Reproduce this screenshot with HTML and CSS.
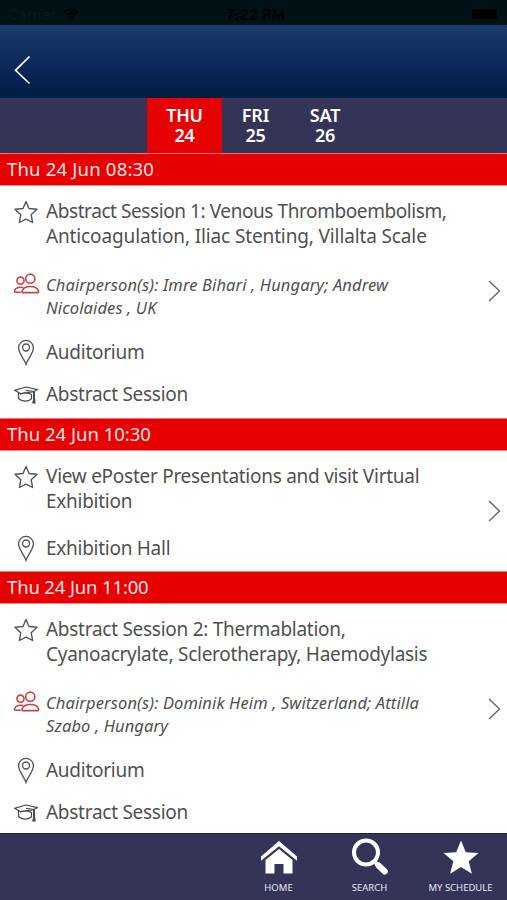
FILE: index.html
```html
<!DOCTYPE html>
<html lang="en">
<head>
  <meta charset="UTF-8">
  <meta name="viewport" content="width=device-width, initial-scale=1">
  <title>Schedule</title>
  <link rel="stylesheet" href="styles.css">
</head>
<body>
<svg class="symbols" width="0" height="0">
  <symbol id="star" viewBox="0 0 24 24">
    <path d="M12 1.400l3 7.100 8 .8-5.800 5.400 1.400 7.800-6.600-3.400-6.600 3.400 1.400-7.800L1 9.300l8-.8z" fill="none" stroke="#555" stroke-width="1.400" stroke-linejoin="round"/>
  </symbol>
  <symbol id="people" viewBox="0 0 28 22">
    <g fill="none" stroke="#c6444a" stroke-width="1.700">
      <circle cx="18" cy="6" r="4.800"/>
      <circle cx="7.700" cy="8" r="3.700"/>
      <path d="M10.200 20.500c-.9 0-1.100-.8-.8-1.700 1-2.900 4-4.600 8.600-4.600s7.600 1.700 8.600 4.600c.3.900.1 1.700-.8 1.700z"/>
      <path d="M8 20.200H2.600c-1.200 0-1.400-.9-1-1.900.9-2.200 3.300-3.400 6.400-3.400 1 0 2 .1 2.700.4"/>
    </g>
  </symbol>
  <symbol id="pin" viewBox="0 0 18 28">
    <g fill="none" stroke="#555" stroke-width="1.400">
      <path d="M9 26.200C7.300 20.600 1.300 15 1.300 9.200a7.700 7.700 0 0 1 15.400 0C16.700 15 10.700 20.600 9 26.200z"/>
      <circle cx="9" cy="8.800" r="3.600"/>
    </g>
  </symbol>
  <symbol id="cap" viewBox="0 0 26 20">
    <g fill="none" stroke="#4a4a4a" stroke-width="1.200" stroke-linejoin="round">
      <path d="M1.500 5.300L13 2l11.500 2.700-5 2.300L7.500 8.500z"/>
      <path d="M5.500 7.500v6c3.500 3.400 9.500 3.400 13 .2V9.500c-3.500-2-8-2-11.500-.2M13 5.300l8 1.200"/>
      <path d="M21 6.500V15" stroke-width="2"/>
      <path d="M20.300 14l-1.300 4.200 3.700.6-.6-4.800z" fill="#4a4a4a" stroke="none"/>
    </g>
  </symbol>
  <symbol id="chevron" viewBox="0 0 14 24">
    <path d="M2 2l10.500 10L2 22" fill="none" stroke="#666" stroke-width="1.400"/>
  </symbol>
</svg>

<div class="app">
  <div class="status">
    <span class="carrier">Carrier
      <svg width="16" height="12" viewBox="0 0 16 12"><path d="M1 4.500a10 10 0 0 1 14 0M3.500 7a6.500 6.500 0 0 1 9 0" fill="none" stroke="#000" stroke-width="2.200"/><path d="M5.500 9a3.600 3.600 0 0 1 5 0L8 11.700z"/></svg>
    </span>
    <span class="clock">7:22 PM</span>
    <span class="battery"><i></i></span>
  </div>

  <header class="header">
    <svg width="17" height="30" viewBox="0 0 17 30"><path d="M15.500 1.500L1.500 15.300l14 13.200" fill="none" stroke="#fff" stroke-width="1.700"/></svg>
  </header>

  <nav class="days">
    <a class="day active">THU<br>24</a>
    <a class="day fri">FRI<br>25</a>
    <a class="day sat">SAT<br>26</a>
  </nav>

  <main class="sessions">
    <h2 class="time wide">Thu 24 Jun 08:30</h2>
    <section class="session long">
      <div class="info">
        <div class="row title"><svg class="icon star"><use href="#star"/></svg><p><span class="tight">Abstract Session 1: Venous Thromboembolism,</span><br><span class="loose">Anticoagulation, Iliac Stenting, Villalta Scale</span></p></div>
        <div class="row chair"><svg class="icon people"><use href="#people"/></svg><p>Chairperson(s): Imre Bihari , Hungary; Andrew<br>Nicolaides , UK</p></div>
        <div class="row place"><svg class="icon pin"><use href="#pin"/></svg><p>Auditorium</p></div>
        <div class="row type"><svg class="icon cap"><use href="#cap"/></svg><p>Abstract Session</p></div>
      </div>
      <svg class="chevron"><use href="#chevron"/></svg>
    </section>

    <h2 class="time">Thu 24 Jun 10:30</h2>
    <section class="session short">
      <div class="info">
        <div class="row title"><svg class="icon star"><use href="#star"/></svg><p>View ePoster Presentations and visit Virtual<br>Exhibition</p></div>
        <div class="row place"><svg class="icon pin"><use href="#pin"/></svg><p>Exhibition Hall</p></div>
      </div>
      <svg class="chevron"><use href="#chevron"/></svg>
    </section>

    <h2 class="time narrow">Thu 24 Jun 11:00</h2>
    <section class="session long">
      <div class="info">
        <div class="row title"><svg class="icon star"><use href="#star"/></svg><p>Abstract Session 2: Thermablation,<br>Cyanoacrylate, Sclerotherapy, Haemodylasis</p></div>
        <div class="row chair"><svg class="icon people"><use href="#people"/></svg><p>Chairperson(s): Dominik Heim , Switzerland; Attilla<br>Szabo , Hungary</p></div>
        <div class="row place"><svg class="icon pin"><use href="#pin"/></svg><p>Auditorium</p></div>
        <div class="row type"><svg class="icon cap"><use href="#cap"/></svg><p>Abstract Session</p></div>
      </div>
      <svg class="chevron"><use href="#chevron"/></svg>
    </section>
  </main>

  <footer class="tabbar">
    <a class="tab">
      <svg width="38" height="38" viewBox="0 0 38 38" fill="#fff"><path d="M1 18.500L19 3l18 15.500v4.200L19 8.200 1 22.700z"/><path d="M5.500 22L19 11l13.500 11v13.500h-9V26h-9v9.500h-9z"/></svg>
      <span>HOME</span>
    </a>
    <a class="tab">
      <svg width="38" height="38" viewBox="0 0 38 38"><circle cx="15" cy="14.500" r="12" fill="none" stroke="#fff" stroke-width="4"/><path d="M23.500 23.500l4 4" stroke="#fff" stroke-width="4"/><path d="M27.500 27.500l6.300 6" stroke="#fff" stroke-width="6" stroke-linecap="round"/></svg>
      <span>SEARCH</span>
    </a>
    <a class="tab">
      <svg width="38" height="38" viewBox="0 0 38 38" fill="#fff"><path d="M19 2.500l4.800 11.700 12.700.9-9.800 8.100 3.200 12.600L19 28.900 8.100 35.800l3.200-12.600-9.800-8.100 12.700-.9z"/></svg>
      <span>MY SCHEDULE</span>
    </a>
  </footer>
</div>
</body>
</html>
```

FILE: styles.css
```css
* {
  box-sizing: border-box;
}
body {
  margin: 0;
  font-family: "Noto Sans", sans-serif;
  color: #505050;
  background: #fff;
}
p, h2 {
  margin: 0;
}
svg {
  display: block;
  flex: none;
}
.symbols {
  position: absolute;
}
.app {
  display: flex;
  flex-direction: column;
  width: 507px;
  height: 900px;
  overflow: hidden;
}

/* top bars */
.status {
  display: grid;
  grid-template-columns: 1fr auto 1fr;
  align-items: center;
  height: 25px;
  padding: 3px 10px 0 15px;
  background: #001216;
  color: #000;
  font: 14px Inter, sans-serif;
}
.carrier {
  display: flex;
  align-items: center;
  gap: 7px;
  margin-left: -7px;
  color: #061b1f;
  letter-spacing: .3px;
}
.clock {
  font-weight: 600;
  letter-spacing: .5px;
}
.battery {
  display: flex;
  justify-content: flex-end;
}
.battery i {
  width: 25px;
  height: 10px;
  border-radius: 2px;
  background: #000;
}
.header {
  display: flex;
  align-items: center;
  height: 73px;
  padding: 17px 0 0 14px;
  background: linear-gradient(#193d6b, #0b2656 60%, #001d43);
}
.days {
  display: flex;
  height: 55px;
  padding-left: 147px;
  background: #333458;
}
.day {
  padding-top: 8px;
  color: #fff;
  font-size: 18px;
  font-weight: 600;
  line-height: 19.500px;
  letter-spacing: -.2px;
  text-align: center;
}
.active {
  width: 75px;
  background: #e60000;
}
.fri {
  width: 67px;
}
.sat {
  width: 72px;
}

/* list */
.sessions {
  height: 680px;
  overflow: hidden;
}
.time {
  height: 33px;
  padding-left: 7px;
  border-top: 1px solid #ef7777;
  border-bottom: 1px solid #f28c8c;
  background: #e60000;
  color: #ffe3e3;
  font-size: 18.500px;
  font-weight: 400;
  line-height: 30px;
}
.wide {
  letter-spacing: .2px;
}
.narrow {
  letter-spacing: -.15px;
}
.session {
  display: flex;
  justify-content: space-between;
  align-items: center;
  padding: 0 6px 0 13px;
}
.long {
  height: 232px;
}
.short {
  height: 120px;
}
.info {
  align-self: flex-start;
  padding-top: 13px;
}
.row {
  display: grid;
  grid-template-columns: 26px auto;
  column-gap: 7px;
  font-size: 19px;
  line-height: 24.500px;
  letter-spacing: -.27px;
  white-space: nowrap;
}
.tight {
  letter-spacing: -.42px;
}
.loose {
  letter-spacing: -.13px;
}
.icon {
  justify-self: center;
}
.star {
  width: 24px;
  height: 24px;
  margin-top: 1px;
}
.people {
  width: 27px;
  height: 21px;
}
.pin {
  width: 18px;
  height: 27px;
  margin: -1px 0 -2px;
}
.cap {
  width: 26px;
  height: 20px;
  margin-top: 3px;
}
.chair {
  margin-top: 25px;
  font-size: 16.500px;
  font-style: italic;
  line-height: 23px;
  letter-spacing: .12px;
}
.place {
  margin-top: 21px;
}
.short .place {
  margin-top: 23px;
}
.type {
  margin-top: 17px;
}
.chevron {
  width: 14px;
  height: 24px;
}
.long .chevron {
  margin-bottom: 22px;
}

/* bottom bar */
.tabbar {
  display: flex;
  justify-content: flex-end;
  height: 67px;
  padding-right: 1px;
  background: #333458;
  border-top: 1px solid #1f2048;
}
.tab {
  display: flex;
  flex-direction: column;
  align-items: center;
  width: 91px;
  padding-top: 4px;
  color: #e8e8f2;
  font-size: 9.500px;
}
.tab span {
  margin-top: 5px;
  line-height: 14px;
}
```
